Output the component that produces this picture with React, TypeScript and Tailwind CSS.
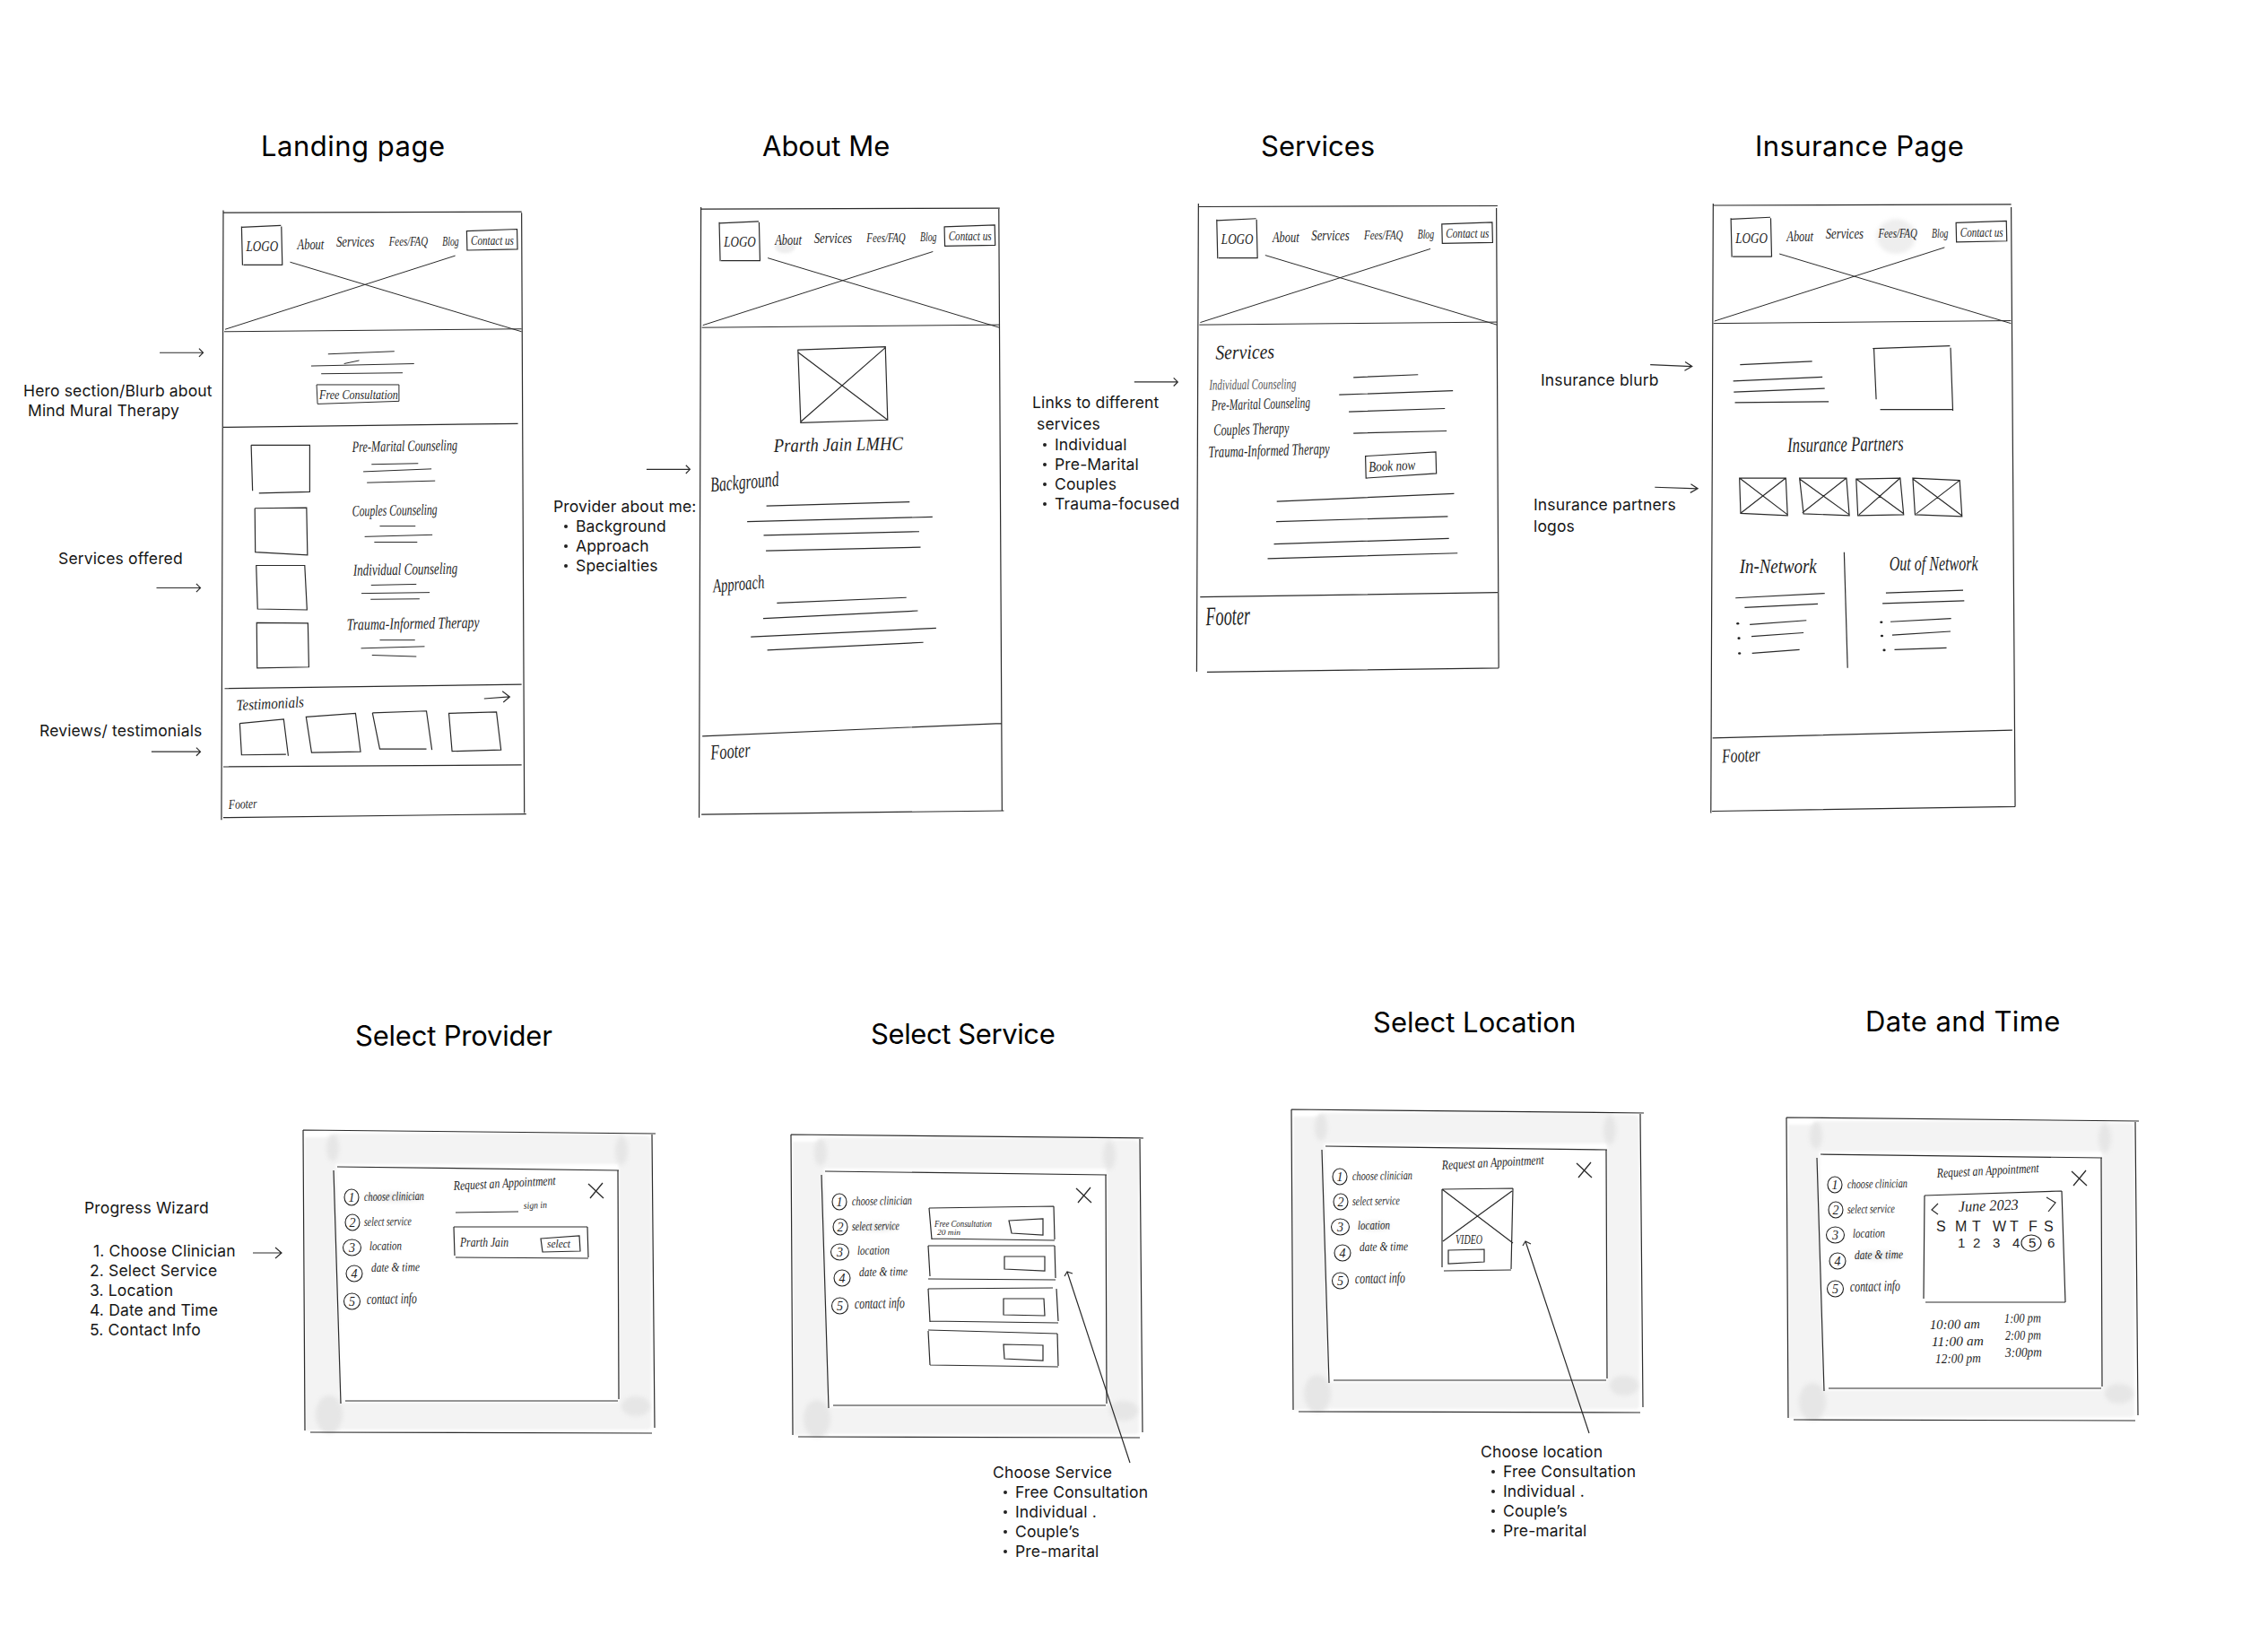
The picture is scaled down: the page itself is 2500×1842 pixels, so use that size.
import type { ReactNode } from "react";

// Plain pen line. Coordinates are whatever the enclosing viewBox uses.
function Ink({ d, w = 1.2 }: { d: string; w?: number }) {
  return <path d={d} fill="none" stroke="#2b2b2b" strokeWidth={w} vectorEffect="non-scaling-stroke" />;
}

type HandProps = { x: number; y: number; w: number; s: number; r?: number; light?: boolean; children: ReactNode };

// Handwritten note: fixed width via textLength so it sits where the pen wrote it
function Hand({ x, y, w, s, r = 0, light, children }: HandProps) {
  return (
    <text
      x={x}
      y={y}
      fontSize={s}
      textLength={w}
      lengthAdjust="spacingAndGlyphs"
      transform={r ? `rotate(${r} ${x} ${y})` : undefined}
      className={light ? "fill-[#555555] italic [font-family:'Liberation_Serif',serif]" : "fill-[#1f1f1f] italic [font-family:'Liberation_Serif',serif]"}
    >
      {children}
    </text>
  );
}

function Arrow({ x1, y1, x2 }: { x1: number; y1: number; x2: number }) {
  return <Ink d={`M${x1} ${y1}L${x2} ${y1}M${x2 - 9} ${y1 - 9}L${x2} ${y1}L${x2 - 9} ${y1 + 9}`} />;
}

function Title({ className, children }: { className: string; children: ReactNode }) {
  return <h2 className={`absolute whitespace-nowrap text-[31px] leading-[40px] font-normal text-black ${className}`}>{children}</h2>;
}

function Note({ className, children }: { className: string; children: ReactNode }) {
  return <div className={`absolute whitespace-nowrap text-[17.5px] leading-[22px] tracking-[0.15px] text-[#161616] ${className}`}>{children}</div>;
}

function Bullets({ items }: { items: string[] }) {
  return (
    <ul className="pl-[12px]">
      {items.map((item) => (
        <li key={item} className="flex items-center">
          <span className="mr-[9px] h-[4px] w-[4px] rounded-full bg-[#222222]" />
          {item}
        </li>
      ))}
    </ul>
  );
}

// Site header with the hero placeholder, drawn from the frame's top left corner
function Header() {
  return (
    <g>
      <Ink d="M40 32L126 28M40 30L42 115M127 30L129 115M44 114L129 114" />
      <Hand x={50} y={84} w={70} s={34}>LOGO</Hand>
      <Hand x={162} y={80} w={58} s={34}>About</Hand>
      <Hand x={247} y={75} w={83} s={32}>Services</Hand>
      <Hand x={362} y={73} w={85} s={27}>Fees/FAQ</Hand>
      <Hand x={479} y={72} w={36} s={27}>Blog</Hand>
      <Ink d="M532 40L642 36L643 80L533 82Z" />
      <Hand x={541} y={70} w={94} s={28}>Contact us</Hand>
      <Ink d="M146 108L652 260M4 255L507 94M2 260L652 254" w={1} />
    </g>
  );
}

function LandingAndAbout() {
  return (
    <svg viewBox="0 0 1568 1568" preserveAspectRatio="none" className="absolute left-0 top-[130px] h-[800px] w-[800px] overflow-visible">
      <Ink d="M488 210L1140 208M488 205L484 1537M1140 210L1146 1522M488 1532L1150 1524M488 679L1132 671M491 1250L1140 1241M488 1421L1140 1417" />
      <g transform="translate(488 210)"><Header /></g>
      <Ink d="M717 519L862 513M680 545L905 540M702 562L880 560M752 540L785 533M692 586L872 586L872 622L694 628Z" w={1} />
      <Hand x={698} y={617} w={172} s={30}>Free Consultation</Hand>

      <Ink d="M549 718L677 718L677 820L566 823M549 718L552 818M557 856L670 855L672 958L558 952L557 856M560 981L666 981L671 1078L563 1076Z M561 1106L673 1107L675 1203L562 1205Z" />
      <Hand x={770} y={733} w={230} s={34} r={-1}>Pre-Marital Counseling</Hand>
      <Hand x={770} y={873} w={186} s={34} r={-1}>Couples Counseling</Hand>
      <Hand x={772} y={1003} w={228} s={36} r={-1}>Individual Counseling</Hand>
      <Hand x={758} y={1122} w={290} s={36} r={-1}>Trauma-Informed Therapy</Hand>
      <Ink d="M812 760L914 758M794 776L943 770M802 800L951 796M830 895L908 895M797 918L945 914M818 930L912 930M811 1024L910 1022M790 1042L939 1040M810 1055L917 1054M830 1144L907 1144M789 1162L928 1158M813 1177L910 1180" w={1} />

      <Hand x={517} y={1298} w={148} s={34} r={-3}>Testimonials</Hand>
      <Ink d="M1058 1272L1114 1268M1098 1256L1114 1268L1100 1280" />
      <Ink d="M524 1326L620 1317L630 1397M524 1326L528 1395L625 1394M669 1312L777 1304L788 1388L681 1390Z M814 1303L932 1299L944 1384M814 1303L830 1382L932 1382M981 1304L1085 1301L1095 1384L988 1387Z" />
      <Hand x={500} y={1513} w={62} s={30} r={-2}>Footer</Hand>

      <Arrow x1={349} y1={516} x2={444} />
      <Arrow x1={342} y1={1030} x2={438} />
      <Arrow x1={331} y1={1388} x2={438} />
      <Arrow x1={1413} y1={771} x2={1508} />

      {/* About me board, same scale so it lives in the same drawing */}
      <g transform="translate(1176 0)">
        <ellipse cx={540} cy={285} rx={22} ry={14} className="fill-[#eeeeee] blur-[3px]" />
        <Ink d="M356 202L1009 200M356 198L352 1532M1007 202L1014 1516M357 1525L1018 1517M359 1354L1012 1326" />
        <g transform="translate(356 201)"><Header /></g>
        <Ink d="M568 510L759 503L764 663L574 669ZM568 515L764 663M759 505L574 667" />
        <Hand x={515} y={733} w={283} s={42} r={-1}>Prarth Jain LMHC</Hand>
        <Hand x={378} y={820} w={150} s={46} r={-5}>Background</Hand>
        <Ink d="M499 851L812 842M457 885L862 875M493 915L833 907M498 949L836 941" />
        <Hand x={383} y={1040} w={113} s={42} r={-5}>Approach</Hand>
        <Ink d="M522 1063L805 1051M492 1097L830 1080M465 1137L870 1118M501 1166L842 1149" />
        <Hand x={378} y={1405} w={87} s={46} r={-4}>Footer</Hand>
        <Arrow x1={1303} y1={580} x2={1398} />
      </g>
    </svg>
  );
}

function ServicesAndInsurance() {
  return (
    <svg viewBox="0 0 1568 1568" preserveAspectRatio="none" className="absolute left-[1300px] top-[130px] h-[800px] w-[1000px] overflow-visible">
      <Ink d="M57 197L580 195M57 190L54 1213M578 200L582 1205M72 1214L582 1205M60 1050L580 1040" />
      <g transform="translate(57 195) scale(0.8 1)"><Header /></g>
      <Hand x={87} y={530} w={103} s={44} r={-1}>Services</Hand>
      <Hand x={76} y={597} w={152} s={32} r={-1} light>Individual Counseling</Hand>
      <Hand x={80} y={642} w={173} s={34} r={-2}>Pre-Marital Counseling</Hand>
      <Hand x={84} y={697} w={132} s={36} r={-2}>Couples Therapy</Hand>
      <Hand x={75} y={745} w={212} s={36} r={-2}>Trauma-Informed Therapy</Hand>
      <Ink d="M328 570L441 564M303 608L502 599M320 645L488 638M328 692L491 687M349 742L472 733L473 780L350 790ZM194 841L504 824M193 885L493 874M189 934L495 922M178 966L510 954" />
      <Hand x={355} y={776} w={82} s={32} r={-3}>Book now</Hand>
      <Hand x={70} y={1112} w={78} s={58} r={-2}>Footer</Hand>

      <ellipse cx={1277} cy={262} rx={34} ry={38} className="fill-[#eeeeee] blur-[4px]" />
      <Ink d="M956 194L1478 192M957 190L953 1522M1478 198L1485 1508M955 1518L1485 1508M956 1358L1480 1341" />
      <g transform="translate(956 192) scale(0.8 1)"><Header /></g>
      <Ink d="M1004 542L1130 535M992 578L1148 569M993 602L1152 594M995 625L1159 623M1236 507L1371 501M1372 505L1376 643M1249 640L1376 640M1238 507L1242 618" />
      <Hand x={1087} y={733} w={203} s={46} r={-1}>Insurance Partners</Hand>
      <Ink d="M1003 790L1084 790L1087 872L1005 867ZM1003 790L1087 870M1084 790L1005 867M1108 790L1190 790L1195 872L1115 868ZM1108 792L1195 870M1190 790L1113 866M1207 792L1284 790L1290 870L1210 872ZM1207 792L1290 868M1284 790L1212 870M1306 790L1388 795L1392 874L1310 870ZM1306 792L1392 872M1388 795L1312 868" />
      <Hand x={1003} y={998} w={135} s={44}>In-Network</Hand>
      <Hand x={1265} y={992} w={155} s={44}>Out of Network</Hand>
      <Ink d="M1186 952L1192 1205" />
      <Ink d="M996 1052L1152 1042M1012 1073L1140 1065M1021 1110L1120 1101M1024 1136L1115 1128M1025 1173L1108 1165M1259 1041L1394 1035M1253 1064L1396 1058M1267 1104L1373 1097M1270 1133L1372 1125M1274 1165L1365 1161" />
      {[[1000, 1108], [1002, 1140], [1003, 1173], [1251, 1105], [1252, 1135], [1256, 1166]].map(([cx, cy]) => (
        <circle key={cy} cx={cx} cy={cy} r={2.5} className="fill-[#222222]" />
      ))}
      <Hand x={973} y={1412} w={67} s={44} r={-3}>Footer</Hand>

      <Ink d="M847 542L920 546M908 536L920 546L907 555M855 810L930 813M918 803L930 813L917 822" />
    </svg>
  );
}

const steps = [
  { n: "1", label: "choose clinician", cx: 54, cy: 75, rx: 8, x: 68, y: 79, w: 67, s: 14 },
  { n: "2", label: "select service", cx: 55, cy: 103, rx: 8, x: 68, y: 107, w: 53, s: 14 },
  { n: "3", label: "location", cx: 54.5, cy: 131, rx: 10, x: 74, y: 134, w: 36, s: 14 },
  { n: "4", label: "date & time", cx: 57, cy: 160, rx: 9, x: 76, y: 158, w: 54, s: 14 },
  { n: "5", label: "contact info", cx: 54.5, cy: 191, rx: 9, x: 71, y: 194, w: 56, s: 17 },
];

// Dialog sketch over the grey scrim, shared by the booking boards. Local pixel coordinates.
function Modal({ className, active, children }: { className: string; active: number; children: ReactNode }) {
  const current = steps[active];
  return (
    <svg viewBox="0 0 393 338" className={`absolute h-[338px] w-[393px] overflow-visible ${className}`}>
      <g className="fill-[#f3f3f3] blur-[1.5px]">
        <rect x={30} y={4} width={332} height={34} rx={8} />
        <path d="M2 8L36 8L42 335L2 335Z" />
        <rect x={352} y={6} width={36} height={326} rx={6} />
        <rect x={40} y={304} width={348} height={30} rx={4} />
      </g>
      <g className="fill-[#e6e6e6] blur-[2px]">
        <ellipse cx={33} cy={20} rx={7} ry={15} />
        <ellipse cx={355} cy={23} rx={7} ry={16} />
        <ellipse cx={29} cy={317} rx={15} ry={21} />
        <ellipse cx={371} cy={308} rx={16} ry={11} />
      </g>
      <Ink d="M0 0L393 4M0 0L2 335M389 5L392 332M8 337L389 338" />
      <Ink d="M38 41L352 45M34 45L42 305M351 45L352 300M47 302L351 302" />
      <ellipse cx={current.x + current.w / 2} cy={current.y - 4} rx={current.w / 2} ry={5} className="fill-[#ececec] blur-[2px]" />
      {steps.map((step) => (
        <g key={step.n}>
          <ellipse cx={step.cx} cy={step.cy} rx={step.rx} ry={9} fill="none" stroke="#222222" strokeWidth={1.1} />
          <Hand x={step.cx - 3.5} y={step.cy + 5} w={7} s={14}>{step.n}</Hand>
          <Hand x={step.x} y={step.y} w={step.w} s={step.s} r={-1}>{step.label}</Hand>
        </g>
      ))}
      {children}
    </svg>
  );
}

function CloseMark() {
  return <Ink d="M318 60L335 76M334 59L320 76" w={1.3} />;
}

function RequestTitle() {
  return <Hand x={168} y={67} w={114} s={15} r={-3}>Request an Appointment</Hand>;
}

function SelectProvider() {
  return (
    <Modal className="left-[338px] top-[1260px]" active={0}>
      <RequestTitle />
      <CloseMark />
      <Ink d="M170 92L240 91" w={1} />
      <Hand x={246} y={88} w={26} s={11} r={-3}>sign in</Hand>
      <Ink d="M168 108L317 108M168 108L169 140M317 108L318 142M170 142L318 143M265 121L308 118L309 135L267 136Z" />
      <Hand x={175} y={130} w={54} s={14}>Prarth Jain</Hand>
      <Hand x={272} y={131} w={26} s={12}>select</Hand>
      <Ink d="M-56 137L-24 137M-31 131L-24 137L-31 143" />
    </Modal>
  );
}

function SelectService() {
  return (
    <Modal className="left-[882px] top-[1265px]" active={1}>
      <CloseMark />
      <Ink d="M154 82L293 80M154 82L157 117M293 80L294 117M157 116L294 118M243 96L281 94L281 112L246 110Z" />
      <Hand x={160} y={103} w={64} s={11}>Free Consultation</Hand>
      <Hand x={163} y={112} w={26} s={9}>20 min</Hand>
      <Ink d="M153 124L294 124M153 124L155 158M294 124L295 160M153 161L295 162M238 136L283 136L283 152L238 150Z" />
      <Ink d="M153 172L292 171M153 172L155 209M296 172L298 208M155 208L298 210M237 183L282 183L283 202L237 201Z" />
      <Ink d="M153 218L297 222M153 219L155 257M297 222L298 258M155 257L298 259M237 234L281 235L281 252L238 250Z" />
      <Ink d="M308 153L378 366M305 158L308 153L314 155" />
    </Modal>
  );
}

function SelectLocation() {
  return (
    <Modal className="left-[1440px] top-[1237px]" active={2}>
      <RequestTitle />
      <CloseMark />
      <Ink d="M168 89L247 88M168 89L168 176M247 88L245 178M170 180L245 179M168 89L247 149M246 91L169 147M175 157L215 156L215 170L175 172Z" />
      <Hand x={183} y={150} w={30} s={14}>VIDEO</Hand>
      <Ink d="M261 147L332 361M258 152L261 147L267 150" />
    </Modal>
  );
}

const dayHeads = [["S", 167], ["M", 188], ["T", 207], ["W", 230], ["T", 249], ["F", 270], ["S", 287]] as const;
const dayNums = [["1", 191], ["2", 208], ["3", 230], ["4", 252], ["5", 270], ["6", 291]] as const;
const slots = [
  { t: "10:00 am", x: 160, y: 236, w: 56 },
  { t: "11:00 am", x: 162, y: 255, w: 58 },
  { t: "12:00 pm", x: 166, y: 274, w: 51 },
  { t: "1:00 pm", x: 243, y: 229, w: 41 },
  { t: "2:00 pm", x: 244, y: 248, w: 40 },
  { t: "3:00pm", x: 244, y: 267, w: 41 },
];

function DateAndTime() {
  return (
    <Modal className="left-[1992px] top-[1246px]" active={3}>
      <RequestTitle />
      <CloseMark />
      <Ink d="M154 87L307 82M154 87L153 202M307 82L311 206M155 206L311 206M169 96L162 103L169 108M290 89L300 95L292 105" />
      <Hand x={192} y={105} w={67} s={17} r={-2}>June 2023</Hand>
      {dayHeads.map(([d, x], i) => (
        <text key={i} x={x} y={127} fontSize={16} className="fill-[#1f1f1f] [font-family:'Liberation_Sans',sans-serif]">{d}</text>
      ))}
      {dayNums.map(([d, x]) => (
        <text key={d} x={x} y={145} fontSize={15} className="fill-[#1f1f1f] [font-family:'Liberation_Sans',sans-serif]">{d}</text>
      ))}
      <ellipse cx={273} cy={140} rx={11} ry={9} fill="none" stroke="#222222" strokeWidth={1.1} />
      {slots.map((slot) => (
        <Hand key={slot.t} x={slot.x} y={slot.y} w={slot.w} s={15} r={-1}>{slot.t}</Hand>
      ))}
    </Modal>
  );
}

export default function App() {
  return (
    <main className="relative h-[1842px] w-[2500px] overflow-hidden bg-white [font-family:Inter,sans-serif]">
      <Title className="left-[291px] top-[143px] tracking-[0.5px]">Landing page</Title>
      <Title className="left-[850px] top-[143px] tracking-[0px]">About Me</Title>
      <Title className="left-[1406px] top-[143px] tracking-[0px]">Services</Title>
      <Title className="left-[1957px] top-[143px] tracking-[0.4px]">Insurance Page</Title>
      <Title className="left-[396px] top-[1135px] tracking-[-0.2px]">Select Provider</Title>
      <Title className="left-[971px] top-[1133px] tracking-[-0.4px]">Select Service</Title>
      <Title className="left-[1531px] top-[1120px] tracking-[0px]">Select Location</Title>
      <Title className="left-[2080px] top-[1119px] tracking-[0.4px]">Date and Time</Title>

      <LandingAndAbout />
      <ServicesAndInsurance />
      <SelectProvider />
      <SelectService />
      <SelectLocation />
      <DateAndTime />

      <Note className="left-[26px] top-[425px] leading-[19px]">
        Hero section/Blurb about
        <div className="pl-[5px]">Mind Mural Therapy</div>
      </Note>
      <Note className="left-[65px] top-[612px]">Services offered</Note>
      <Note className="left-[44px] top-[804px]">Reviews/ testimonials</Note>
      <Note className="left-[617px] top-[554px]">
        Provider about me:
        <Bullets items={["Background", "Approach", "Specialties"]} />
      </Note>
      <Note className="left-[1151px] top-[437px] leading-[24px]">
        Links to different
        <div className="pl-[5px]">services</div>
        <div className="leading-[22px]">
          <Bullets items={["Individual", "Pre-Marital", "Couples", "Trauma-focused"]} />
        </div>
      </Note>
      <Note className="left-[1718px] top-[413px]">Insurance blurb</Note>
      <Note className="left-[1710px] top-[551px] leading-[24px]">
        Insurance partners
        <div>logos</div>
      </Note>
      <Note className="left-[94px] top-[1336px]">Progress Wizard</Note>
      <Note className="left-[100px] top-[1384px]">
        <ol>
          <li className="pl-[4px]">1. Choose Clinician</li>
          <li>2. Select Service</li>
          <li>3. Location</li>
          <li>4. Date and Time</li>
          <li>5. Contact Info</li>
        </ol>
      </Note>
      <Note className="left-[1107px] top-[1631px]">
        Choose Service
        <Bullets items={["Free Consultation", "Individual .", "Couple’s", "Pre-marital"]} />
      </Note>
      <Note className="left-[1651px] top-[1608px]">
        Choose location
        <Bullets items={["Free Consultation", "Individual .", "Couple’s", "Pre-marital"]} />
      </Note>
    </main>
  );
}
